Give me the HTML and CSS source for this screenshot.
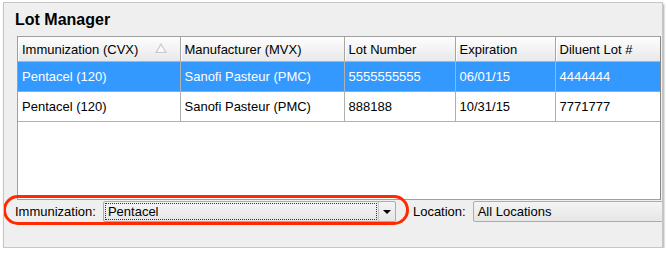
FILE: index.html
```html
<!DOCTYPE html>
<html lang="en">
<head>
  <meta charset="UTF-8" />
  <title>Lot Manager</title>
  <link rel="stylesheet" href="styles.css">
</head>
<body>
  <div class="panel">
    <h1 class="title">Lot Manager</h1>

    <div class="grid">
      <table class="lots">
        <colgroup>
          <col class="c-imm">
          <col class="c-mfr">
          <col class="c-lot">
          <col class="c-exp">
          <col>
        </colgroup>
        <thead>
          <tr>
            <th class="sorted">Immunization (CVX) <span class="sort"></span></th>
            <th>Manufacturer (MVX)</th>
            <th>Lot Number</th>
            <th>Expiration</th>
            <th>Diluent Lot #</th>
          </tr>
        </thead>
        <tbody>
          <tr class="selected">
            <td>Pentacel (120)</td>
            <td>Sanofi Pasteur (PMC)</td>
            <td>5555555555</td>
            <td>06/01/15</td>
            <td>4444444</td>
          </tr>
          <tr>
            <td>Pentacel (120)</td>
            <td>Sanofi Pasteur (PMC)</td>
            <td>888188</td>
            <td>10/31/15</td>
            <td>7771777</td>
          </tr>
        </tbody>
      </table>
    </div>

    <div class="filters">
      <label class="filter-label">Immunization:</label>
      <div class="combo combo-imm">
        <span class="combo-text focused">Pentacel</span>
        <span class="combo-btn"><span class="arrow"></span></span>
      </div>
      <label class="filter-label loc-label">Location:</label>
      <div class="combo combo-loc">
        <span class="combo-text">All Locations</span>
      </div>
    </div>

    <div class="highlight"></div>
  </div>
</body>
</html>
```

FILE: styles.css
```css
body {
  margin: 0;
  background: #fff;
  font-family: "Liberation Sans", Arial, sans-serif;
  font-size: 13px;
  color: #000;
}
.panel {
  position: relative;
  margin: 2px 0 0 3px;
  width: 658px;
  height: 244px;
  border: 1px solid #c6c6c6;
  background: #efefef;
  box-shadow: 1px 2px 2px rgba(0, 0, 0, 0.35);
  overflow: hidden;
}
.title {
  margin: 0;
  padding: 7px 0 0 11px;
  height: 26px;
  font-size: 16px;
  font-weight: bold;
  line-height: 20px;
}
.grid {
  margin: 0 0 0 13px;
  width: 642px;
  height: 162px;
  border: 1px solid #a0a0a0;
  border-right-color: #888;
  background: #fff;
  overflow: hidden;
}
.lots {
  border-collapse: collapse;
  table-layout: fixed;
  width: 643px;
}
.c-imm { width: 162px; }
.c-mfr { width: 164px; }
.c-lot { width: 111px; }
.c-exp { width: 100px; }
.lots th {
  height: 24px;
  padding: 0 4px;
  text-align: left;
  font-weight: normal;
  background: linear-gradient(#fdfdfd, #f3f3f3 50%, #e8e8e8);
  border-right: 1px solid #a5a5a5;
  border-bottom: 1px solid #b5b5b5;
  box-shadow: inset 1px 0 0 #fff;
  white-space: nowrap;
}
.lots th.sorted {
  position: relative;
}
.sort {
  position: absolute;
  right: 13px;
  top: 6px;
  width: 0;
  height: 0;
  border-left: 6px solid transparent;
  border-right: 6px solid transparent;
  border-bottom: 10px solid #c8c8c8;
}
.sort::after {
  content: "";
  position: absolute;
  left: -4px;
  top: 2px;
  border-left: 4px solid transparent;
  border-right: 4px solid transparent;
  border-bottom: 7px solid #fafafa;
}
.lots td {
  height: 29px;
  padding: 0 4px;
  border-right: 1px solid #b0b0b0;
  border-bottom: 1px solid #b0b0b0;
  white-space: nowrap;
}
.lots tr.selected td {
  background: #3399ff;
  color: #fff;
  border-bottom-color: #9ab;
}
.filters {
  display: flex;
  align-items: center;
  gap: 7px;
  margin-top: 1px;
  padding-left: 11px;
  height: 21px;
}
.filter-label {
  white-space: nowrap;
}
.loc-label {
  margin-left: 10px;
}
.combo {
  display: flex;
  align-items: stretch;
  height: 19px;
  border: 1px solid #acacac;
  border-radius: 2px;
  background: linear-gradient(#f4f4f4, #e6e6e6);
}
.combo-imm {
  width: 291px;
}
.combo-loc {
  flex: 1;
  margin-right: -10px;
}
.combo-text {
  flex: 1;
  margin: 1px;
  padding: 0 2px;
  line-height: 15px;
  border: 1px solid transparent;
}
.combo-text.focused {
  border: 1px dotted #333;
}
.combo-btn {
  width: 16px;
  border-left: 1px solid #c4c4c4;
  display: flex;
  align-items: center;
  justify-content: center;
}
.arrow {
  border-left: 4px solid transparent;
  border-right: 4px solid transparent;
  border-top: 4px solid #000;
}
.highlight {
  position: absolute;
  left: -1px;
  top: 192px;
  width: 400px;
  height: 24px;
  border: 3px solid #ff2a00;
  border-radius: 15px;
}
```
